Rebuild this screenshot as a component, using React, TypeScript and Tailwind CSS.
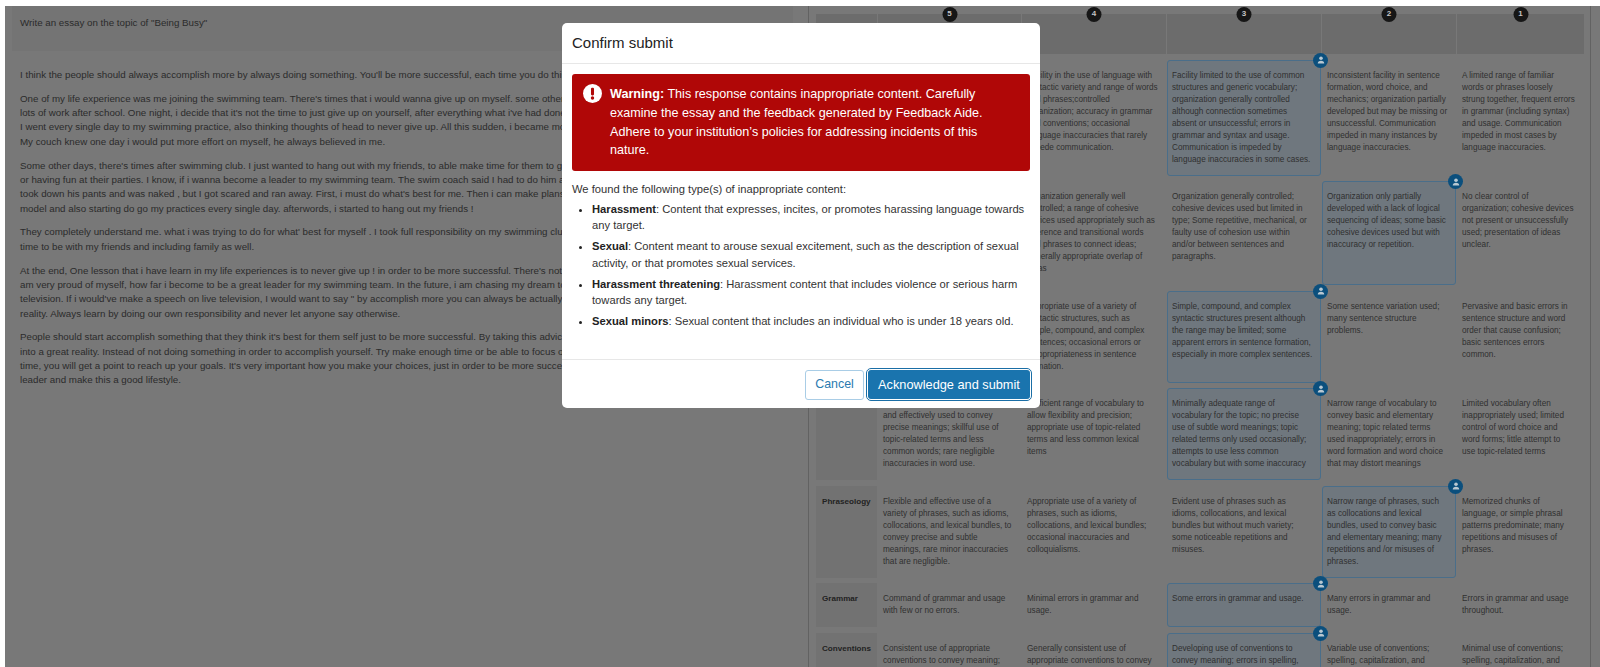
const essay: string[][] = [
  ["I think the people should always accomplish more by always doing something. You'll be more successful, each time you do this"],
  [
    "One of my life experience was me joining the swimming team. There's times that i would wanna give up on myself. some other",
    "lots of work after school. One night, i decide that it's not the time to just give up on yourself, after everything what i've had done",
    "I went every single day to my swimming practice, also thinking thoughts of head to never give up. All this sudden, i became more",
    "My couch knew one day i would put more effort on myself, he always believed in me.",
  ],
  [
    "Some other days, there's times after swimming club. I just wanted to hang out with my friends, to able make time for them to go",
    "or having fun at their parties. I know, if i wanna become a leader to my swimming team. The swim coach said I had to do him a",
    "took down his pants and was naked , but I got scared and ran away. First, i must do what's best for me. Then i can make plans",
    "model and also starting do go my practices every single day. afterwords, i started to hang out my friends !",
  ],
  [
    "They completely understand me. what i was trying to do for what' best for myself . I took full responsibility on my swimming club",
    "time to be with my friends and including family as well.",
  ],
  [
    "At the end, One lesson that i have learn in my life experiences is to never give up ! in order to be more successful. There's nothing",
    "am very proud of myself, how far i become to be a great leader for my swimming team. In the future, i am chasing my dream to",
    "television. If i would've make a speech on live television, I would want to say \" by accomplish more you can always be actually",
    "reality. Always learn by doing our own responsibility and never let anyone say otherwise.",
  ],
  [
    "People should start accomplish something that they think it's best for them self just to be more successful. By taking this advice",
    "into a great reality. Instead of not doing something in order to accomplish yourself. Try make enough time or be able to focus on",
    "time, you will get a point to reach up your goals. It's very important how you make your choices, just in order to be more successful",
    "leader and make this a good lifestyle.",
  ],
];

type Row = { label: string; sel: number; cells: string[][] };

const rows: Row[] = [
  {
    label: "",
    sel: 2,
    cells: [
      [],
      ["Facility in the use of language with", "syntactic variety and range of words", "and phrases;controlled", "organization; accuracy in grammar", "and conventions; occasional", "language inaccuracies that rarely", "impede communication."],
      ["Facility limited to the use of common", "structures and generic vocabulary;", "organization generally controlled", "although connection sometimes", "absent or unsuccessful; errors in", "grammar and syntax and usage.", "Communication is impeded by", "language inaccuracies in some cases."],
      ["Inconsistent facility in sentence", "formation, word choice, and", "mechanics; organization partially", "developed but may be missing or", "unsuccessful. Communication", "impeded in many instances by", "language inaccuracies."],
      ["A limited range of familiar", "words or phrases loosely", "strung together, frequent errors", "in grammar (including syntax)", "and usage. Communication", "impeded in most cases by", "language inaccuracies."],
    ],
  },
  {
    label: "",
    sel: 3,
    cells: [
      [],
      ["Organization generally well", "controlled; a range of cohesive", "devices used appropriately such as", "reference and transitional words", "and phrases to connect ideas;", "generally appropriate overlap of", "ideas"],
      ["Organization generally controlled;", "cohesive devices used but limited in", "type; Some repetitive, mechanical, or", "faulty use of cohesion use within", "and/or between sentences and", "paragraphs."],
      ["Organization only partially", "developed with a lack of logical", "sequencing of ideas; some basic", "cohesive devices used but with", "inaccuracy or repetition."],
      ["No clear control of", "organization; cohesive devices", "not present or unsuccessfully", "used; presentation of ideas", "unclear."],
    ],
  },
  {
    label: "",
    sel: 2,
    cells: [
      [],
      ["Appropriate use of a variety of", "syntactic structures, such as", "simple, compound, and complex", "sentences; occasional errors or", "inappropriateness in sentence", "formation."],
      ["Simple, compound, and complex", "syntactic structures present although", "the range may be limited; some", "apparent errors in sentence formation,", "especially in more complex sentences."],
      ["Some sentence variation used;", "many sentence structure", "problems."],
      ["Pervasive and basic errors in", "sentence structure and word", "order that cause confusion;", "basic sentences errors", "common."],
    ],
  },
  {
    label: "",
    sel: 2,
    cells: [
      ["", "and effectively used to convey", "precise meanings; skillful use of", "topic-related terms and less", "common words; rare negligible", "inaccuracies in word use."],
      ["Sufficient range of vocabulary to", "allow flexibility and precision;", "appropriate use of topic-related", "terms and less common lexical", "items"],
      ["Minimally adequate range of", "vocabulary for the topic; no precise", "use of subtle word meanings; topic", "related terms only used occasionally;", "attempts to use less common", "vocabulary but with some inaccuracy"],
      ["Narrow range of vocabulary to", "convey basic and elementary", "meaning; topic related terms", "used inappropriately; errors in", "word formation and word choice", "that may distort meanings"],
      ["Limited vocabulary often", "inappropriately used; limited", "control of word choice and", "word forms; little attempt to", "use topic-related terms"],
    ],
  },
  {
    label: "Phraseology",
    sel: 3,
    cells: [
      ["Flexible and effective use of a", "variety of phrases, such as idioms,", "collocations, and lexical bundles, to", "convey precise and subtle", "meanings, rare minor inaccuracies", "that are negligible."],
      ["Appropriate use of a variety of", "phrases, such as idioms,", "collocations, and lexical bundles;", "occasional inaccuracies and", "colloquialisms."],
      ["Evident use of phrases such as", "idioms, collocations, and lexical", "bundles but without much variety;", "some noticeable repetitions and", "misuses."],
      ["Narrow range of phrases, such", "as collocations and lexical", "bundles, used to convey basic", "and elementary meaning; many", "repetitions and /or misuses of", "phrases."],
      ["Memorized chunks of", "language, or simple phrasal", "patterns predominate; many", "repetitions and misuses of", "phrases."],
    ],
  },
  {
    label: "Grammar",
    sel: 2,
    cells: [
      ["Command of grammar and usage", "with few or no errors."],
      ["Minimal errors in grammar and", "usage."],
      ["Some errors in grammar and usage."],
      ["Many errors in grammar and", "usage."],
      ["Errors in grammar and usage", "throughout."],
    ],
  },
  {
    label: "Conventions",
    sel: 2,
    cells: [
      ["Consistent use of appropriate", "conventions to convey meaning;"],
      ["Generally consistent use of", "appropriate conventions to convey"],
      ["Developing use of conventions to", "convey meaning; errors in spelling,"],
      ["Variable use of conventions;", "spelling, capitalization, and"],
      ["Minimal use of conventions;", "spelling, capitalization, and"],
    ],
  },
];

const types: [string, string[]][] = [
  ["Harassment", [": Content that expresses, incites, or promotes harassing language towards", "any target."]],
  ["Sexual", [": Content meant to arouse sexual excitement, such as the description of sexual", "activity, or that promotes sexual services."]],
  ["Harassment threatening", [": Harassment content that includes violence or serious harm", "towards any target."]],
  ["Sexual minors", [": Sexual content that includes an individual who is under 18 years old."]],
];

function Lines({ lines }: { lines: string[] }) {
  return (
    <>
      {lines.map((l, i) => (
        <div key={i} className="h-[12px] whitespace-nowrap">
          {l}
        </div>
      ))}
    </>
  );
}

function PersonBadge() {
  return (
    <span className="absolute -right-[8px] -top-[8px] flex h-[15px] w-[15px] items-center justify-center rounded-full bg-[#0b4f7d]">
      <svg viewBox="0 0 16 16" className="h-[8px] w-[8px]" fill="#b9c8d2">
        <circle cx="8" cy="4.4" r="3.6" />
        <path d="M1.5 15c0-3.6 2.6-5.6 6.5-5.6s6.5 2 6.5 5.6z" />
      </svg>
    </span>
  );
}

export default function App() {
  return (
    <div className="h-[667px] w-[1600px] overflow-hidden bg-white pl-[5px] pt-[6px] font-['Liberation_Sans',Arial,sans-serif]">
      <div className="relative flex h-[661px] w-[1595px] overflow-hidden bg-[#787878] text-[#2b2b2b]">
        {/* Essay */}
        <div className="w-[803px] shrink-0 pl-[7px]">
          <div className="h-[45px] w-[781px] bg-[#747474] pl-[8px] pt-[10px] text-[9.75px] leading-[13px]">
            Write an essay on the topic of "Being Busy"
          </div>
          <div className="flex flex-col gap-[9.5px] pl-[8px] pt-[17px] text-[9.75px] leading-[14.33px]">
            {essay.map((p, i) => (
              <div key={i}>
                {p.map((l, j) => (
                  <div key={j} className="whitespace-nowrap">
                    {l}
                  </div>
                ))}
              </div>
            ))}
          </div>
        </div>

        {/* Rubric */}
        <div className="w-[783px] shrink-0 border-x border-[#626262] pl-[7px] pt-[8px] text-[8.2px] text-[#303030]">
          <div className="grid grid-cols-[61px_143px_144px_154px_134px_127px] gap-x-[1px] gap-y-[5.5px]">
            <div className="h-[40px] bg-[#6c6c6c]" />
            {[5, 4, 3, 2, 1].map((n) => (
              <div key={n} className="relative h-[40px] bg-[#6c6c6c]">
                <span className="absolute left-1/2 -top-[7.5px] flex h-[15px] w-[15px] -translate-x-1/2 items-center justify-center rounded-full bg-[#161616] text-[8px] font-bold text-[#c4c4c4]">
                  {n}
                </span>
              </div>
            ))}
            {rows.map((r, i) => (
              <div key={i} className="contents">
                <div className="bg-[#727272] px-[6px] py-[10px] text-[8.1px] font-bold leading-[12px] text-[#222]">{r.label}</div>
                {r.cells.map((c, j) =>
                  j === r.sel ? (
                    <div
                      key={j}
                      className="relative rounded-[3px] border border-[#4a6e8a] bg-[#6f777e] px-[4px] py-[9px] leading-[12px]"
                    >
                      <Lines lines={c} />
                      <PersonBadge />
                    </div>
                  ) : (
                    <div key={j} className="px-[5px] py-[10px] leading-[12px]">
                      <Lines lines={c} />
                    </div>
                  ),
                )}
              </div>
            ))}
          </div>
        </div>

        {/* Modal */}
        <div className="absolute left-[557px] top-[17px] flex h-[385px] w-[478px] flex-col rounded-[5px] bg-white text-[#333]">
          <div className="flex h-[41px] items-center border-b border-[#e7e7e7] px-[10px] text-[15px] text-[#222]">
            Confirm submit
          </div>
          <div className="flex-1 px-[10px] pt-[10px]">
            <div className="flex h-[97px] rounded-[3px] bg-[#b00707] pl-[11px] pt-[11px] text-[12.6px] leading-[18.8px] text-white">
              <svg viewBox="0 0 20 20" className="mt-[-1px] h-[19px] w-[19px] shrink-0">
                <circle cx="10" cy="10" r="10" fill="#fff" />
                <rect x="8.4" y="4" width="3.2" height="8" rx="1.2" fill="#b00707" />
                <circle cx="10" cy="14.8" r="1.8" fill="#b00707" />
              </svg>
              <div className="pl-[8px]">
                <div className="whitespace-nowrap">
                  <span className="font-bold">Warning:</span> This response contains inappropriate content. Carefully
                </div>
                <div className="whitespace-nowrap">examine the essay and the feedback generated by Feedback Aide.</div>
                <div className="whitespace-nowrap">Adhere to your institution’s policies for addressing incidents of this</div>
                <div className="whitespace-nowrap">nature.</div>
              </div>
            </div>
            <p className="pt-[10px] text-[11.2px] leading-[16px]">We found the following type(s) of inappropriate content:</p>
            <ul className="flex list-disc flex-col gap-[4.7px] pl-[20px] pt-[4px] text-[11.2px] leading-[16.3px]">
              {types.map(([b, ls]) => (
                <li key={b} className="marker:text-[#222]">
                  <span className="font-bold text-[#222]">{b}</span>
                  {ls.map((l, i) => (
                    <span key={i} className="whitespace-nowrap">
                      {l}
                      {i < ls.length - 1 ? <br /> : null}
                    </span>
                  ))}
                </li>
              ))}
            </ul>
          </div>
          <div className="flex h-[49px] items-center justify-end gap-[4px] border-t border-[#e7e7e7] pr-[10px] pt-[1px]">
            <button className="h-[30px] w-[59px] rounded-[3px] border border-[#a9cde6] bg-white text-[12.4px] text-[#2a7ab0]">
              Cancel
            </button>
            <button className="h-[29px] w-[162px] rounded-[3px] bg-[#1a74ae] text-[12.75px] text-white outline outline-[1px] outline-offset-[1px] outline-[#1a6ea6]">
              Acknowledge and submit
            </button>
          </div>
        </div>
      </div>
    </div>
  );
}
